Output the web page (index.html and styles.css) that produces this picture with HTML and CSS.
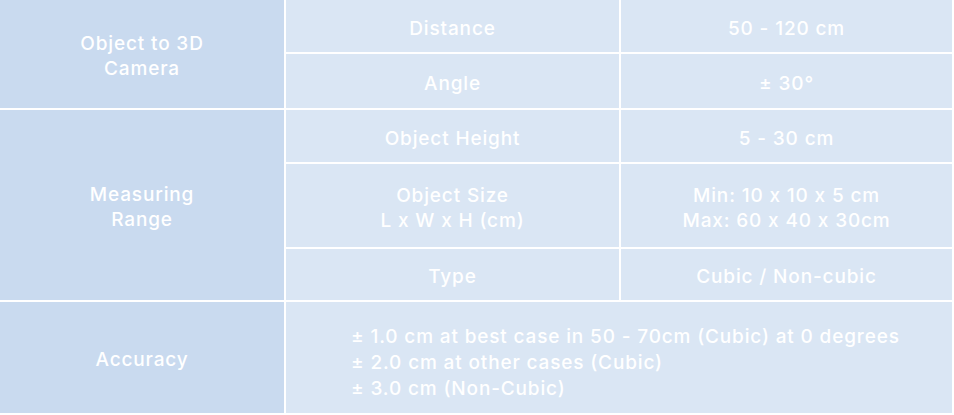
FILE: index.html
```html
<!DOCTYPE html>
<html lang="en">
<head>
<meta charset="utf-8">
<title>Specifications</title>
<link rel="stylesheet" href="styles.css">
</head>
<body>
<div class="spec">
  <div class="cell head r1">Object to 3D<br>Camera</div>
  <div class="cell">Distance</div>
  <div class="cell">50 - 120 cm</div>
  <div class="cell">Angle</div>
  <div class="cell">± 30°</div>

  <div class="cell head r2">Measuring<br>Range</div>
  <div class="cell">Object Height</div>
  <div class="cell">5 - 30 cm</div>
  <div class="cell">Object Size<br>L x W x H (cm)</div>
  <div class="cell">Min: 10 x 10 x 5 cm<br>Max: 60 x 40 x 30cm</div>
  <div class="cell">Type</div>
  <div class="cell">Cubic / Non-cubic</div>

  <div class="cell head">Accuracy</div>
  <div class="cell wide">
    <div class="lines">
      <div>± 1.0 cm at best case in 50 - 70cm (Cubic) at 0 degrees</div>
      <div>± 2.0 cm at other cases (Cubic)</div>
      <div>± 3.0 cm (Non-Cubic)</div>
    </div>
  </div>
</div>
</body>
</html>
```

FILE: styles.css
```css
html, body {
  margin: 0;
  padding: 0;
  background: #ffffff;
}

.spec {
  display: grid;
  grid-template-columns: 284px 333px 331px;
  grid-template-rows: 52px 54px 52px 83px 51px 111px;
  gap: 2px;
  width: 952px;
  background: #ffffff;
  font-family: Inter, "DejaVu Sans", sans-serif;
  font-size: 19px;
  font-weight: 450;
  letter-spacing: 0.85px;
  color: #ffffff;
}

.cell {
  background: #dae6f4;
  display: flex;
  align-items: center;
  justify-content: center;
  text-align: center;
  line-height: 25px;
  padding-top: 4px;
  box-sizing: border-box;
}

.head {
  background: #c9daef;
}

.r1 {
  grid-row: span 2;
}

.r2 {
  grid-row: span 3;
}

.wide {
  grid-column: span 2;
  justify-content: flex-start;
  text-align: left;
  padding-left: 65px;
  padding-top: 11px;
}

.lines {
  line-height: 26px;
}
```
